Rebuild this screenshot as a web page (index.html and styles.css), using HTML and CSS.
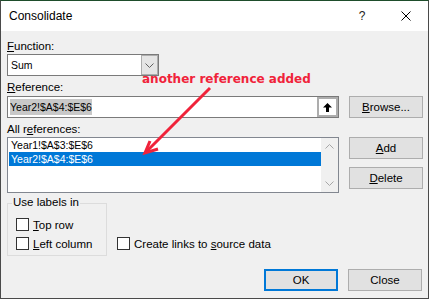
FILE: index.html
```html
<!DOCTYPE html>
<html>
<head>
  <title>Consolidate</title>
  <link rel="stylesheet" href="styles.css">
</head>
<body>
  <div class="dialog">
    <!-- Title bar -->
    <div class="titlebar">
      <span class="title">Consolidate</span>
      <span class="title-btn help">?</span>
      <span class="title-btn close-x">
        <svg width="10" height="10" viewBox="0 0 10 10"><path d="M0.5 0.5 L9.5 9.5 M9.5 0.5 L0.5 9.5" stroke="#000" stroke-width="1" fill="none"/></svg>
      </span>
    </div>

    <div class="body">
      <div class="label"><u>F</u>unction:</div>
      <div class="combo">
        <span class="combo-value">Sum</span>
        <span class="combo-btn">
          <svg width="9" height="5" viewBox="0 0 9 5"><path d="M0.5 0.5 L4.5 4.5 L8.5 0.5" stroke="#606060" stroke-width="1" fill="none"/></svg>
        </span>
      </div>

      <div class="label ref-label"><u>R</u>eference:</div>
      <div class="field-row">
        <div class="refedit">
          <span class="selected-text">Year2!$A$4:$E$6</span>
          <span class="collapse-btn">
            <svg width="9" height="9" viewBox="0 0 9 9"><path d="M4.5 0 L9 4.5 L6 4.5 L6 9 L3 9 L3 4.5 L0 4.5 Z" fill="#000"/></svg>
          </span>
        </div>
        <button class="btn"><u>B</u>rowse...</button>
      </div>

      <div class="label refs-label">All r<u>e</u>ferences:</div>
      <div class="field-row list-row">
        <div class="listbox">
          <div class="items">
            <div class="item">Year1!$A$3:$E$6</div>
            <div class="item selected">Year2!$A$4:$E$6</div>
          </div>
          <div class="scrollbar">
            <span class="sb-arrow">
              <svg width="9" height="5" viewBox="0 0 9 5"><path d="M0.5 4.5 L4.5 0.5 L8.5 4.5" stroke="#a6a6a6" stroke-width="1" fill="none"/></svg>
            </span>
            <span class="sb-arrow">
              <svg width="9" height="5" viewBox="0 0 9 5"><path d="M0.5 0.5 L4.5 4.5 L8.5 0.5" stroke="#a6a6a6" stroke-width="1" fill="none"/></svg>
            </span>
          </div>
        </div>
        <div class="side-buttons">
          <button class="btn"><u>A</u>dd</button>
          <button class="btn"><u>D</u>elete</button>
        </div>
      </div>

      <div class="options-row">
        <div class="group">
          <div class="group-title">Use labels in</div>
          <label class="check first-check"><span class="box"></span><span><u>T</u>op row</span></label>
          <label class="check"><span class="box"></span><span><u>L</u>eft column</span></label>
        </div>
        <label class="check create-links"><span class="box"></span><span>Create links to <u>s</u>ource data</span></label>
      </div>

      <div class="footer">
        <button class="btn btn-default">OK</button>
        <button class="btn">Close</button>
      </div>
    </div>

    <!-- Annotation drawn over the dialog -->
    <div class="note">another reference added</div>
    <svg class="note-arrow" width="429" height="299" viewBox="0 0 429 299">
      <path d="M210 88 L146 152" stroke="#f0233a" stroke-width="3" fill="none"/>
      <path d="M150 141 L145 153 L158 149" stroke="#f0233a" stroke-width="3" fill="none"/>
    </svg>
  </div>
</body>
</html>
```

FILE: styles.css
```css
/* Page */
body {
  margin: 0;
  background-color: #ffffff;
  font-family: "Liberation Sans", Arial, sans-serif;
  font-size: 11.5px;
  color: #000;
}
.dialog {
  position: relative;
  width: 429px;
  height: 299px;
  box-sizing: border-box;
  border: 1px solid #4a4a4a;
  border-top-color: #1e4d2b;
  background-color: #f0f0f0;
  display: flex;
  flex-direction: column;
}
/* Title bar */
.titlebar {
  height: 30px;
  background-color: #fff;
  display: flex;
  align-items: center;
  padding-left: 8px;
}
.title {
  flex: 1;
  font-size: 12px;
  line-height: 15px;
}
.title-btn {
  width: 44px;
  height: 30px;
  display: flex;
  align-items: center;
  justify-content: center;
}
.help {
  font-size: 12px;
  color: #222;
}
/* Dialog body */
.body {
  flex: 1;
  padding: 8px 5px 0 6px;
}
.label {
  line-height: 15px;
  height: 15px;
}
.ref-label,
.refs-label {
  margin-top: 4px;
}
.combo {
  width: 152px;
  height: 22px;
  box-sizing: border-box;
  border: 1px solid #7a7a7a;
  background-color: #fff;
  display: flex;
  align-items: center;
}
.combo-value {
  flex: 1;
  padding-left: 3px;
  font-size: 10.5px;
}
.combo-btn {
  width: 17px;
  height: 20px;
  box-sizing: border-box;
  border: 1px solid #adadad;
  background-color: #e5e5e5;
  display: flex;
  align-items: center;
  justify-content: center;
}
.field-row {
  display: flex;
  align-items: flex-start;
  gap: 10px;
  margin-top: 1px;
}
.list-row {
  margin-top: 0;
}
.refedit {
  width: 332px;
  height: 22px;
  box-sizing: border-box;
  border: 1px solid #7a7a7a;
  background-color: #fff;
  display: flex;
  align-items: center;
  padding-left: 2px;
}
.selected-text {
  background-color: #c8c8c8;
  line-height: 16px;
  font-size: 10.5px;
}
.collapse-btn {
  margin-left: auto;
  width: 21px;
  height: 20px;
  box-sizing: border-box;
  border: 2px solid #adadad;
  background-color: #fff;
  display: flex;
  align-items: center;
  justify-content: center;
}
.btn {
  width: 74px;
  height: 22px;
  box-sizing: border-box;
  border: 1px solid #adadad;
  background-color: #e1e1e1;
  font: inherit;
  color: #000;
  padding: 0;
}
.btn-default {
  border: 2px solid #0078d7;
}
/* All references list */
.listbox {
  width: 332px;
  height: 56px;
  box-sizing: border-box;
  border: 1px solid #828790;
  background-color: #fff;
  display: flex;
  padding-left: 1px;
}
.items {
  width: 312px;
}
.item {
  height: 14px;
  line-height: 14px;
  padding-left: 2px;
  font-size: 10.5px;
}
.item.selected {
  background-color: #0078d7;
  color: #fff;
}
.scrollbar {
  width: 17px;
  background-color: #f0f0f0;
  display: flex;
  flex-direction: column;
  justify-content: space-between;
}
.sb-arrow {
  height: 17px;
  display: flex;
  align-items: center;
  justify-content: center;
}
.side-buttons {
  display: flex;
  flex-direction: column;
  gap: 8px;
}
/* Use labels in group */
.options-row {
  display: flex;
  margin-top: 10px;
}
.group {
  width: 100px;
  box-sizing: border-box;
  border: 1px solid #dcdcdc;
  padding-bottom: 2px;
}
.group-title {
  width: max-content;
  margin: -9px 0 0 4px;
  padding: 0 1px;
  line-height: 15px;
  background-color: #f0f0f0;
}
.check {
  display: flex;
  align-items: center;
  gap: 4px;
  height: 19px;
  padding-left: 8px;
}
.first-check {
  margin-top: 5px;
}
.box {
  width: 13px;
  height: 13px;
  box-sizing: border-box;
  border: 1px solid #333;
  background-color: #fff;
}
.create-links {
  align-self: flex-end;
  margin: 0 0 3px 10px;
  padding-left: 0;
}
/* OK / Close */
.footer {
  display: flex;
  justify-content: flex-end;
  gap: 10px;
  margin-top: 13px;
  padding-right: 1px;
}
/* Red annotation */
.note {
  position: absolute;
  left: 141px;
  top: 71px;
  font-family: "DejaVu Sans", Verdana, sans-serif;
  font-weight: bold;
  font-size: 12px;
  line-height: 14px;
  color: #f0233a;
  white-space: nowrap;
}
.note-arrow {
  position: absolute;
  left: -1px;
  top: -1px;
  pointer-events: none;
}
```
